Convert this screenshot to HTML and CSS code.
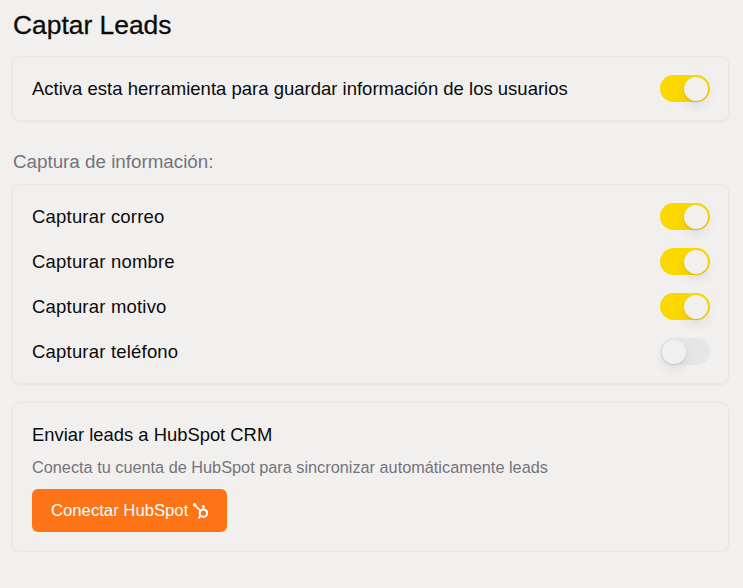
FILE: index.html
```html
<!DOCTYPE html>
<html lang="es">
<head>
    <meta charset="UTF-8">
    <meta name="viewport" content="width=device-width, initial-scale=1.0">
    <title>Captar Leads</title>
    <link rel="stylesheet" href="styles.css">
</head>
<body>
    <h1 class="page-title">Captar Leads</h1>

    <div class="card card-single">
        <div class="row">
            <span>Activa esta herramienta para guardar información de los usuarios</span>
            <span class="switch on"></span>
        </div>
    </div>

    <h2 class="section-label">Captura de información:</h2>

    <div class="card card-list">
        <div class="row">
            <span>Capturar correo</span>
            <span class="switch on"></span>
        </div>
        <div class="row">
            <span>Capturar nombre</span>
            <span class="switch on"></span>
        </div>
        <div class="row">
            <span>Capturar motivo</span>
            <span class="switch on"></span>
        </div>
        <div class="row">
            <span>Capturar teléfono</span>
            <span class="switch"></span>
        </div>
    </div>

    <div class="card card-hubspot">
        <h3 class="hubspot-title">Enviar leads a HubSpot CRM</h3>
        <p class="hubspot-text">Conecta tu cuenta de HubSpot para sincronizar automáticamente leads</p>
        <button class="hubspot-btn">
            Conectar HubSpot
            <svg class="hubspot-icon" viewBox="0 0 18 18" width="18" height="18" fill="none" stroke="#fff">
                <circle cx="11.4" cy="11.2" r="3.7" stroke-width="2.1"/>
                <path d="M11.4 7V4.6" stroke-width="1.7"/>
                <path d="M9.9 4.2h3" stroke-width="1.9"/>
                <path d="M8.4 8.6L3.2 3.6" stroke-width="1.6"/>
                <circle cx="2.6" cy="2.8" r="1.7" fill="#fff" stroke="none"/>
                <path d="M8.4 14L6.4 16.4" stroke-width="1.7"/>
            </svg>
        </button>
    </div>
</body>
</html>
```

FILE: styles.css
```css
body {
    font-family: 'Liberation Sans', Arial, sans-serif;
    background-color: #f1f0ee;
    color: #0b0b0b;
    margin: 0;
    padding: 0 14px 0 12px;
}
.page-title {
    font-size: 26.4px;
    font-weight: 400;
    line-height: 30px;
    margin: 0;
    padding: 10px 0 16px 1px;
    -webkit-text-stroke: 0.3px #0b0b0b;
}
.card {
    border: 1px solid #e8e7e5;
    border-radius: 8px;
    box-shadow: 0 1px 3px rgba(0, 0, 0, 0.05);
    padding: 0 18px 0 19px;
}
.card-single {
    padding-top: 18px;
    padding-bottom: 18px;
}
.row {
    display: flex;
    align-items: center;
    justify-content: space-between;
    font-size: 18.5px;
    height: 27px;
}
.section-label {
    color: #74747c;
    font-size: 18.8px;
    font-weight: 400;
    line-height: 22px;
    margin: 30px 0 11px 1px;
}
.card-list {
    display: flex;
    flex-direction: column;
    gap: 18px;
    padding-top: 18px;
    padding-bottom: 18px;
    letter-spacing: 0.2px;
}
.switch {
    position: relative;
    display: block;
    width: 50px;
    height: 27px;
    border-radius: 14px;
    background-color: #e6e6e6;
}
.switch::after {
    content: "";
    position: absolute;
    top: 1.5px;
    left: 2px;
    width: 24px;
    height: 24px;
    border-radius: 50%;
    background-color: #f1f0ee;
    box-shadow: 0 1px 2px rgba(0, 0, 0, 0.1), 0 6px 12px rgba(0, 0, 0, 0.07);
}
.switch.on {
    background-color: #fbd800;
}
.switch.on::after {
    left: 24px;
}
.card-hubspot {
    margin-top: 18px;
    padding-top: 20px;
    padding-bottom: 19px;
}
.hubspot-title {
    font-size: 18.4px;
    font-weight: 400;
    line-height: 24px;
    margin: 0;
}
.hubspot-text {
    color: #74747c;
    font-size: 16.3px;
    line-height: 20px;
    margin: 10px 0 12px;
}
.hubspot-btn {
    display: flex;
    align-items: center;
    gap: 4px;
    height: 43px;
    padding: 0 17px 0 19px;
    border: none;
    border-radius: 6px;
    background-color: #fd7416;
    color: #fff;
    font-family: inherit;
    font-size: 16.7px;
    cursor: pointer;
}
```
